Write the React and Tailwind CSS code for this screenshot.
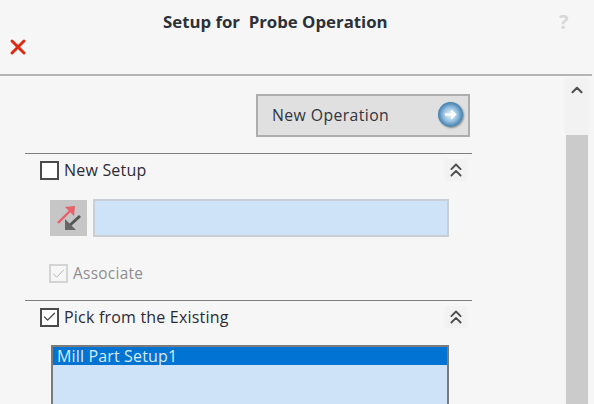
import { ChevronUp, ChevronsUp, Check, X } from 'lucide-react';

function CheckBox({ checked, disabled }) {
  return (
    <div className={`w-[19px] h-[19px] border-2 flex items-center justify-center shrink-0 ${disabled ? 'border-[#d4d4d4] bg-[#f6f6f6]' : 'border-[#4a4a4a] bg-white'}`}>
      {checked && <Check size={18} strokeWidth={disabled ? 1.5 : 2} className={disabled ? 'text-[#b0b0b0]' : 'text-[#444]'} />}
    </div>
  );
}

function SectionHeader({ label, checked }) {
  return (
    <div className="w-[447px] ml-[25px] border-t border-[#7f7f7f] h-[33px] pl-[15px] pr-[5px] flex items-center gap-[5px]">
      <CheckBox checked={checked} />
      <span className="text-[16px] text-[#2b2b35] tracking-[0.2px]">{label}</span>
      <div className="ml-auto w-[22px] h-[22px] bg-[#f2f2f2] flex items-center justify-center">
        <ChevronsUp size={22} strokeWidth={2} className="text-[#4c4c4c]" />
      </div>
    </div>
  );
}

function SwapIcon() {
  return (
    <svg width="30" height="30" viewBox="0 0 30 30" fill="none">
      <path d="M4 20 L17 7" stroke="#e8606a" strokeWidth="2.4" />
      <path d="M11 4 L21 3 L20 13 Z" fill="#e8606a" />
      <path d="M26 13 L15 23" stroke="#555" strokeWidth="3" />
      <path d="M11 16 L11 27 L22 27 Z" fill="#666" />
    </svg>
  );
}

function ArrowBall() {
  return (
    <div className="mb-[2px] w-[25px] h-[25px] rounded-full bg-[radial-gradient(circle_at_50%_50%,#e8f3fb_0%,#9cc4e2_38%,#3a7cab_72%,#27587f_100%)] shadow-[1px_1px_2px_#888] flex items-center justify-center">
      <svg width="15" height="13" viewBox="0 0 15 13" fill="none">
        <path d="M2 6.5 H11 M8 2.5 L12 6.5 L8 10.5" stroke="#fff" strokeWidth="2.4" />
      </svg>
    </div>
  );
}

export default function App() {
  return (
    <div className="w-[594px] h-[404px] overflow-hidden bg-[#f6f6f6] flex flex-col font-['Open_Sans','Noto_Sans',sans-serif]">
      {/* Title bar */}
      <div className="relative h-[76px] shrink-0 mr-[2px] border-b-2 border-[#b4b4b4]">
        <div className="pt-[11px] pl-[163px] text-[16.8px] leading-[22px] font-bold text-[#2c3038] whitespace-pre">Setup for  Probe Operation</div>
        <X size={24} strokeWidth={3} className="absolute left-[6px] top-[35px] text-[#dd2a12]" />
        <span className="absolute left-[559px] top-[9px] text-[20px] leading-[26px] font-bold text-[#d8d8d8]">?</span>
      </div>

      <div className="flex flex-1 min-h-0">
        <div className="flex-1 min-w-0">
          <div className="flex pl-[256px] pt-[18px] pb-[16px]">
            <div className="w-[214px] h-[43px] bg-[#e0e0e0] border-2 border-[#adadad] pl-[14px] pr-[5px] flex items-center justify-between">
              <span className="text-[15.8px] text-[#30343c] tracking-[0.4px]">New Operation</span>
              <ArrowBall />
            </div>
          </div>

          <SectionHeader label="New Setup" />

          <div className="flex items-center gap-[6px] pl-[50px] pt-[13px]">
            <div className="w-[37px] h-[36px] bg-[#c6c6c6] flex items-center justify-center">
              <SwapIcon />
            </div>
            <div className="w-[356px] h-[38px] bg-[#cfe3f8] border-2 border-[#c9ced4]" />
          </div>

          <div className="flex items-center gap-[5px] pl-[49px] pt-[27px] pb-[17px]">
            <CheckBox checked disabled />
            <span className="text-[15.4px] leading-[19px] text-[#8e8e8e] tracking-[0.3px]">Associate</span>
          </div>

          <SectionHeader label="Pick from the Existing" checked />

          <div className="w-[398px] ml-[51px] mt-[12px] h-[80px] bg-[#cfe3f8] border-2 border-b-0 border-[#7b7b7b]">
            <div className="h-[18px] bg-[#0173d2] text-[16px] leading-[18px] text-[#d8ebfb] pl-[4px] tracking-[0.15px]">Mill Part Setup1</div>
          </div>
        </div>

        {/* Scrollbar */}
        <div className="w-[24px] mr-[5px] mt-[2px] flex flex-col shrink-0 bg-[#f2f2f2]">
          <div className="h-[57px] flex justify-center pt-[3px]">
            <ChevronUp size={18} strokeWidth={2.8} className="text-[#505050]" />
          </div>
          <div className="flex-1 bg-[#cbcbcb] ml-[1px] mr-[1px]" />
        </div>
      </div>
    </div>
  );
}
